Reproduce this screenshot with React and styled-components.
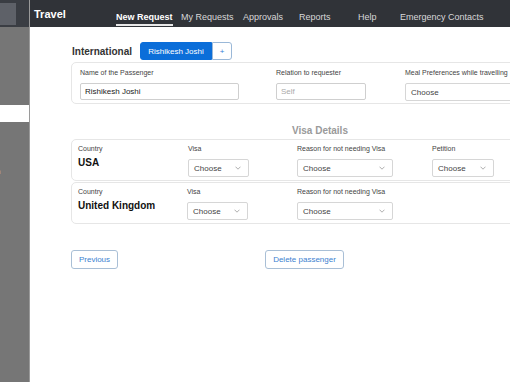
import React from "react";
import styled, { createGlobalStyle } from "styled-components";

const Global = createGlobalStyle`
  html, body { margin: 0; padding: 0; overflow: hidden; background: #fff; }
  body { font-family: "Liberation Sans", Arial, sans-serif; }
  * { box-sizing: border-box; }
`;

const Page = styled.div`
  display: flex;
  width: 510px;
  height: 382px;
  overflow: hidden;
  white-space: nowrap;
`;

const Sidebar = styled.div`
  width: 30px;
  flex: none;
  display: flex;
  flex-direction: column;
  border-right: 1px solid #9a9a9a;
`;

const SideTop = styled.div`
  height: 27px;
  background: #3a3d43;
  padding: 3px 13px 2px 0;
  display: flex;
`;

const SideTopBox = styled.div`
  flex: 1;
  background: #5e6168;
`;

const SideBlock = styled.div`
  background: #767676;
  height: ${(p) => p.$h || "auto"};
  flex: ${(p) => (p.$grow ? 1 : "none")};
  margin-top: ${(p) => p.$mt || 0}px;
  position: relative;
  overflow: hidden;
`;

const SideText = styled.span`
  position: absolute;
  left: -4px;
  top: 45px;
  color: #eee;
  font-size: 8px;
`;

const Main = styled.div`
  flex: 1;
  display: flex;
  flex-direction: column;
  min-width: 0;
  overflow: hidden;
`;

const Header = styled.div`
  height: 27px;
  flex: none;
  background: #303338;
  display: flex;
  align-items: stretch;
  padding-left: 4px;
`;

const Brand = styled.div`
  color: #fff;
  font-weight: bold;
  font-size: 11px;
  width: 82px;
  padding-top: 8px;
`;

const Nav = styled.nav`
  display: flex;
`;

const NavItem = styled.div`
  width: ${(p) => (p.$w ? `${p.$w}px` : "auto")};
  display: flex;
`;

const NavLabel = styled.span`
  color: ${(p) => (p.$active ? "#fff" : "#d8d8d8")};
  font-weight: ${(p) => (p.$active ? "bold" : "normal")};
  font-size: 9px;
  padding-top: 12px;
  height: 26px;
  border-bottom: 2px solid ${(p) => (p.$active ? "#e8e8e8" : "transparent")};
`;

const Content = styled.div`
  padding: 15px 0 0 41px;
  width: 530px;
  display: flex;
  flex-direction: column;
`;

const TitleRow = styled.div`
  display: flex;
  align-items: center;
  height: 18px;
`;

const Title = styled.div`
  font-weight: bold;
  font-size: 10px;
  color: #333;
  width: 69px;
  padding-left: 1px;
`;

const PillButton = styled.div`
  height: 18px;
  display: flex;
  align-items: center;
  justify-content: center;
  font-size: 8px;
  background: ${(p) => (p.$primary ? "#0b6ed9" : "#fff")};
  color: ${(p) => (p.$primary ? "#fff" : "#3a7bd5")};
  border: 1px solid ${(p) => (p.$primary ? "#0b6ed9" : "#9ab8d8")};
  border-radius: ${(p) => (p.$primary ? "3px 0 0 3px" : "0 3px 3px 0")};
  width: ${(p) => p.$w}px;
`;

const Card = styled.div`
  border: 1px solid #e6e6e6;
  border-radius: 5px;
  margin-top: ${(p) => p.$mt}px;
  padding: ${(p) => p.$pad};
  display: grid;
  grid-template-columns: ${(p) => p.$cols};
  height: 42px;
`;

const Field = styled.div`
  display: flex;
  flex-direction: column;
`;

const Label = styled.div`
  font-size: 7px;
  color: #444;
  height: 10px;
  line-height: 10px;
`;

const TextInput = styled.div`
  margin-top: ${(p) => p.$mt}px;
  width: ${(p) => p.$w}px;
  height: 17px;
  border: 1px solid #cfcfcf;
  border-radius: 2px;
  font-size: 8px;
  color: ${(p) => (p.$placeholder ? "#aaa" : "#222")};
  display: flex;
  align-items: center;
  padding-left: 4px;
`;

const Select = styled.div`
  margin-top: ${(p) => p.$mt}px;
  width: ${(p) => p.$w}px;
  height: 18px;
  border: 1px solid #d6d6d6;
  border-radius: 2px;
  font-size: 8px;
  color: #444;
  display: flex;
  align-items: center;
  justify-content: space-between;
  padding: 0 7px 0 5px;
`;

const Chevron = () => (
  <svg width="6" height="4" viewBox="0 0 6 4">
    <path d="M0.5 0.7 L3 3.2 L5.5 0.7" fill="none" stroke="#999" strokeWidth="0.8" />
  </svg>
);

const SectionTitle = styled.div`
  font-size: 10px;
  font-weight: bold;
  color: #9a9a9a;
  margin: 20px 0 0 221px;
  height: 13px;
  line-height: 13px;
`;

const Country = styled.div`
  font-weight: bold;
  font-size: 10px;
  color: #111;
  margin-top: 3px;
`;

const Actions = styled.div`
  display: flex;
  margin-top: 26px;
`;

const OutlineButton = styled.div`
  height: 19px;
  border: 1px solid #a9bfd6;
  border-radius: 3px;
  color: #3d7fd0;
  font-size: 8px;
  display: flex;
  align-items: center;
  justify-content: center;
  width: ${(p) => p.$w}px;
  margin-right: ${(p) => p.$mr || 0}px;
`;

const navItems = [
  ["New Request", true, 65],
  ["My Requests", false, 62],
  ["Approvals", false, 56],
  ["Reports", false, 59],
  ["Help", false, 42],
  ["Emergency Contacts", false, 0],
];

export default function App() {
  return (
    <>
      <Global />
      <Page>
        <Sidebar>
          <SideTop>
            <SideTopBox />
          </SideTop>
          <SideBlock $h="78px" />
          <SideBlock $grow $mt={17}>
            <SideText>n</SideText>
          </SideBlock>
        </Sidebar>
        <Main>
          <Header>
            <Brand>Travel</Brand>
            <Nav>
              {navItems.map(([t, a, w]) => (
                <NavItem key={t} $w={w}>
                  <NavLabel $active={a}>{t}</NavLabel>
                </NavItem>
              ))}
            </Nav>
          </Header>
          <Content>
            <TitleRow>
              <Title>International</Title>
              <PillButton $primary $w={72}>Rishikesh Joshi</PillButton>
              <PillButton $w={20}>+</PillButton>
            </TitleRow>
            <Card $mt={2} $pad="5px 0 0 8px" $cols="196px 129px 1fr">
              <Field>
                <Label>Name of the Passenger</Label>
                <TextInput $mt={5} $w={159}>Rishikesh Joshi</TextInput>
              </Field>
              <Field>
                <Label>Relation to requester</Label>
                <TextInput $mt={5} $w={90} $placeholder>Self</TextInput>
              </Field>
              <Field>
                <Label>Meal Preferences while travelling</Label>
                <Select $mt={5} $w={120}>
                  Choose
                </Select>
              </Field>
            </Card>
            <SectionTitle>Visa Details</SectionTitle>
            <Card $mt={2} $pad="4px 0 0 6px" $cols="110px 109px 135px 1fr">
              <Field>
                <Label>Country</Label>
                <Country>USA</Country>
              </Field>
              <Field>
                <Label>Visa</Label>
                <Select $mt={5} $w={61}>Choose<Chevron /></Select>
              </Field>
              <Field>
                <Label>Reason for not needing Visa</Label>
                <Select $mt={5} $w={96}>Choose<Chevron /></Select>
              </Field>
              <Field>
                <Label>Petition</Label>
                <Select $mt={5} $w={62}>Choose<Chevron /></Select>
              </Field>
            </Card>
            <Card $mt={1} $pad="4px 0 0 6px" $cols="109px 110px 135px 1fr">
              <Field>
                <Label>Country</Label>
                <Country>United Kingdom</Country>
              </Field>
              <Field>
                <Label>Visa</Label>
                <Select $mt={5} $w={61}>Choose<Chevron /></Select>
              </Field>
              <Field>
                <Label>Reason for not needing Visa</Label>
                <Select $mt={5} $w={96}>Choose<Chevron /></Select>
              </Field>
            </Card>
            <Actions>
              <OutlineButton $w={47} $mr={147}>Previous</OutlineButton>
              <OutlineButton $w={79}>Delete passenger</OutlineButton>
            </Actions>
          </Content>
        </Main>
      </Page>
    </>
  );
}
